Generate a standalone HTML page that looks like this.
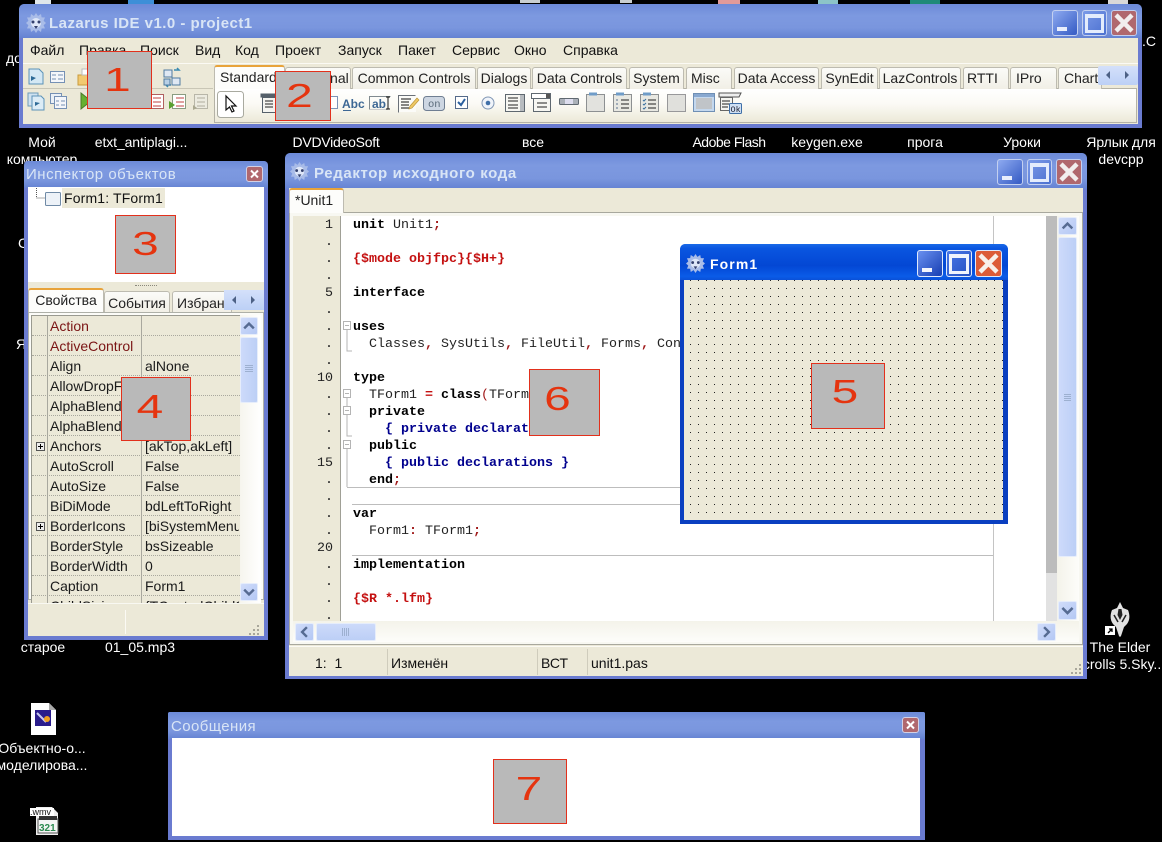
<!DOCTYPE html>
<html><head><meta charset="utf-8"><title>Lazarus IDE</title>
<style>
html,body{margin:0;padding:0;background:#000;}
#p{position:relative;width:1162px;height:842px;overflow:hidden;background:#000;font-family:"Liberation Sans",sans-serif;font-size:14px;}
.a{position:absolute;}
.t{position:absolute;white-space:nowrap;line-height:16px;color:#111;}
.d{position:absolute;white-space:nowrap;line-height:16px;color:#fff;transform:translateX(-50%);font-size:14px;}
.win{position:absolute;background:#6a7bd0;border-radius:6px 6px 0 0;}
.title{position:absolute;border-radius:5px 5px 0 0;background:linear-gradient(#6c8ad8 0,#7d99e0 35%,#7a96de 70%,#6482d2 100%);}
.tt{position:absolute;white-space:nowrap;color:#d9e5f6;font-weight:bold;line-height:18px;}
.btn{position:absolute;box-sizing:border-box;border:1px solid #c3d0f0;border-radius:3px;}
.tab{position:absolute;box-sizing:border-box;top:67px;height:22px;border:1px solid #bdbbb0;border-bottom:0;border-radius:3px 3px 0 0;background:linear-gradient(#fbfbf8,#f1efe6);text-align:center;line-height:21px;color:#222;white-space:nowrap;overflow:hidden;}
.sb{position:absolute;box-sizing:border-box;border:1px solid #e6edfb;border-radius:2px;background:linear-gradient(135deg,#d0dcfa,#b4c8f4);}
.box{position:absolute;box-sizing:border-box;background:#b9b9b9;border:1px solid #e2301c;overflow:hidden;}
.box span{position:absolute;left:0;right:0;text-align:center;color:#e5340f;font-size:33px;line-height:40px;transform:scaleX(1.45);}
.c{position:absolute;left:0;white-space:pre;font:13.33px/17px "Liberation Mono",monospace;color:#222;height:17px;}
.k{font-weight:bold;color:#000;}
.s{color:#a01818;font-weight:bold;}
.r{font-weight:bold;color:#c41010;}
.b{font-weight:bold;color:#00008e;}
.n{position:absolute;right:0;font:13.33px/17px "Liberation Mono",monospace;color:#222;}
.row{position:absolute;left:0;width:208px;height:20px;border-bottom:1px dotted #a9a89e;box-sizing:border-box;}
.gn{position:absolute;left:18px;top:2px;line-height:16px;white-space:nowrap;color:#1a1a1a;}
.gv{position:absolute;left:113px;top:2px;line-height:16px;white-space:nowrap;color:#1a1a1a;width:94px;overflow:hidden;}
</style></head><body><div id="p">

<svg width="0" height="0" style="position:absolute"><defs>
<symbol id="gear" viewBox="0 0 20 20">
<path d="M10 0l2 3 3-2 .6 3.4 3.4.1-1.4 3.2L20 10l-2.4 2.2 1.4 3.2-3.4.1L15 19l-3-2-2 3-2-3-3 2-.6-3.5-3.4-.1 1.4-3.2L0 10l2.4-2.3L1 4.500l3.400-.1L5 1l3 2z" fill="#a9bce8"/>
<circle cx="10" cy="10" r="5" fill="#dfe7f8"/><circle cx="7" cy="9" r="1.500" fill="#33406e"/><circle cx="13" cy="9" r="1.500" fill="#33406e"/><path d="M8 13l2 3 2-3z" fill="#33406e"/>
</symbol>
<symbol id="dn" viewBox="0 0 10 10"><path d="M2 3.500l3 3 3-3" fill="none" stroke="#566b92" stroke-width="1.500"/></symbol>
<symbol id="up" viewBox="0 0 10 10"><path d="M2 6.500l3-3 3 3" fill="none" stroke="#566b92" stroke-width="1.500"/></symbol>
<symbol id="lf" viewBox="0 0 10 10"><path d="M6.500 2L3.500 5l3 3" fill="none" stroke="#566b92" stroke-width="1.500"/></symbol>
<symbol id="rt" viewBox="0 0 10 10"><path d="M3.500 2l3 3-3 3" fill="none" stroke="#566b92" stroke-width="1.500"/></symbol>
</defs></svg>

<!-- desktop -->
<div class="a" style="left:35px;top:0;width:16px;height:4px;background:#dfe6ea"></div>
<div class="a" style="left:128px;top:0;width:26px;height:4px;background:#3d8fd8"></div>
<div class="a" style="left:520px;top:0;width:20px;height:3px;background:#c8ced0"></div>
<div class="a" style="left:620px;top:0;width:12px;height:3px;background:#c8ced0"></div>
<div class="a" style="left:718px;top:0;width:22px;height:4px;background:#e09a9a"></div>
<div class="a" style="left:818px;top:0;width:20px;height:4px;background:#8cc4c8"></div>
<div class="a" style="left:910px;top:0;width:30px;height:4px;background:#1f8a78"></div>
<div class="a" style="left:1108px;top:0;width:20px;height:4px;background:#d8d8d8"></div>
<div class="d" style="left:14px;top:50px;">до</div>
<div class="d" style="left:1149px;top:33px;">.С</div>
<div class="d" style="left:42px;top:134px;">Мой</div>
<div class="d" style="left:42px;top:151px;">компьютер</div>
<div class="d" style="left:141px;top:134px;letter-spacing:-.1px">etxt_antiplagi...</div>
<div class="d" style="left:336px;top:134px;letter-spacing:-.25px">DVDVideoSoft</div>
<div class="d" style="left:533px;top:134px;">все</div>
<div class="d" style="left:729px;top:134px;letter-spacing:-.5px">Adobe Flash</div>
<div class="d" style="left:827px;top:134px;">keygen.exe</div>
<div class="d" style="left:925px;top:134px;">прога</div>
<div class="d" style="left:1022px;top:134px;">Уроки</div>
<div class="d" style="left:1121px;top:134px;">Ярлык для</div>
<div class="d" style="left:1121px;top:151px;">devcpp</div>
<div class="d" style="left:23px;top:235px;">С</div>
<div class="d" style="left:21px;top:336px;">Я</div>
<div class="d" style="left:43px;top:639px;">старое</div>
<div class="d" style="left:140px;top:639px;">01_05.mp3</div>
<div class="d" style="left:1120px;top:639px;">The Elder</div>
<div class="d" style="left:1124px;top:656px;">crolls 5.Sky...</div>
<div class="d" style="left:42px;top:740px;">Объектно-о...</div>
<div class="d" style="left:42px;top:757px;">моделирова...</div>
<svg class="a" style="left:28px;top:700px" width="32" height="140" viewBox="0 0 32 140">
<path d="M3 3h18l7 7v25H3z" fill="#fff"/><path d="M21 3v7h7z" fill="#aaa"/>
<rect x="7" y="10" width="16" height="16" fill="#2a1c8c"/><path d="M9 13l9 9" stroke="#c8c8f0" stroke-width="2"/><circle cx="19" cy="19" r="3" fill="#f0a020"/>
<path d="M8 107h16l6 6v22H8z" fill="#eee"/>
<rect x="2" y="108" width="24" height="8" fill="#fff"/>
<text x="2" y="115" font-size="9" fill="#111" font-family="Liberation Sans">.wmv</text>
<rect x="10" y="119" width="20" height="14" fill="#f4f4f4" stroke="#555"/><rect x="11" y="116" width="18" height="4" fill="#333"/>
<text x="11" y="131" font-size="10" font-weight="bold" fill="#2c8a50" font-family="Liberation Sans">321</text>
</svg>
<svg class="a" style="left:1104px;top:602px" width="30" height="36" viewBox="0 0 30 36">
<path d="M16 0l3 6 5 2c2 5 2 10-1 14l-3 3-3 9-1 1-1-1-3-9-3-3C6 18 6 13 8 8l5-2z" fill="#e2e2e2"/>
<path d="M14.500 7h3l1 6-2.500 5-2.500-5z" fill="#222"/><path d="M10 13l4 7M22 13l-4 7" stroke="#222" stroke-width="1.500"/>
<rect x="1" y="24" width="10" height="9" fill="#fff"/><path d="M4 31l4-4M5 27h3v3" stroke="#000" stroke-width="1.300" fill="none"/>
</svg>

<!-- main window -->
<div class="win" style="left:19px;top:4px;width:1123px;height:124px;"></div>
<div class="title" style="left:19px;top:4px;width:1123px;height:34px;"></div>
<svg class="a" style="left:26px;top:13px" width="20" height="20"><use href="#gear"/></svg>
<div class="tt" style="left:49px;top:15px;font-size:15px;letter-spacing:.47px;">Lazarus IDE v1.0 - project1</div>
<div class="btn" style="left:1052px;top:10px;width:26px;height:26px;background:linear-gradient(135deg,#8eaaf0,#3d62c8 90%);"><div class="a" style="left:4px;bottom:4px;width:10px;height:4px;background:#e8eefc"></div></div>
<div class="btn" style="left:1082px;top:10px;width:25px;height:26px;background:linear-gradient(135deg,#7b9ae8,#4b70d0);"><div class="a" style="left:2px;top:3px;right:2px;bottom:2px;border:3px solid #e4ecfc;border-top-width:4px;box-sizing:border-box;"></div></div>
<div class="btn" style="left:1111px;top:10px;width:26px;height:26px;background:#b0686e;"><svg width="24" height="24" style="display:block"><path d="M4 4l16 16M20 4L4 20" stroke="#f2eeee" stroke-width="4.500"/></svg></div>

<div class="a" style="left:23px;top:38px;width:1115px;height:86px;background:#ece9d8;"></div>
<div class="t" style="left:30px;top:42px;">Файл</div>
<div class="t" style="left:79px;top:42px;">Правка</div>
<div class="t" style="left:140px;top:42px;">Поиск</div>
<div class="t" style="left:195px;top:42px;">Вид</div>
<div class="t" style="left:235px;top:42px;">Код</div>
<div class="t" style="left:275px;top:42px;">Проект</div>
<div class="t" style="left:338px;top:42px;">Запуск</div>
<div class="t" style="left:398px;top:42px;">Пакет</div>
<div class="t" style="left:452px;top:42px;">Сервис</div>
<div class="t" style="left:514px;top:42px;">Окно</div>
<div class="t" style="left:563px;top:42px;">Справка</div>
<div class="a" style="left:23px;top:63px;width:1115px;height:1px;background:#fbfaf4"></div>
<div class="a" style="left:23px;top:88px;width:190px;height:1px;background:#c9c6b6"></div>

<!-- palette -->
<div class="a" style="left:214px;top:88px;width:923px;height:35px;box-sizing:border-box;border:1px solid #b4b2a6;background:linear-gradient(#fff 0,#fbfaf5 45%,#ece9d8 100%);"></div>
<div class="tab" style="left:214px;top:65px;height:24px;width:71px;background:#fdfdfb;border-top:2px solid #e8a33a;border-bottom:0;line-height:20px;text-align:left;padding-left:5px;">Standard</div>
<div class="tab" style="left:285px;width:66px;">Additional</div>
<div class="tab" style="left:352px;width:124px;">Common Controls</div>
<div class="tab" style="left:477px;width:54px;">Dialogs</div>
<div class="tab" style="left:532px;width:95px;">Data Controls</div>
<div class="tab" style="left:629px;width:55px;">System</div>
<div class="tab" style="left:686px;width:46px;text-align:left;padding-left:4px;">Misc</div>
<div class="tab" style="left:734px;width:85px;">Data Access</div>
<div class="tab" style="left:821px;width:57px;">SynEdit</div>
<div class="tab" style="left:879px;width:82px;">LazControls</div>
<div class="tab" style="left:963px;width:46px;text-align:left;padding-left:3px;">RTTI</div>
<div class="tab" style="left:1010px;width:47px;text-align:left;padding-left:5px;">IPro</div>
<div class="tab" style="left:1058px;width:44px;text-align:left;padding-left:5px;">Chart</div>
<div class="a" style="left:1098px;top:66px;width:40px;height:19px;background:linear-gradient(#d4e0fa,#bcd0f6);border-radius:2px;"></div>
<svg class="a" style="left:1103px;top:70px" width="10" height="10"><path d="M7 1L3 5l4 4z" fill="#4d6185"/></svg>
<svg class="a" style="left:1122px;top:70px" width="10" height="10"><path d="M3 1l4 4-4 4z" fill="#4d6185"/></svg>

<svg class="a" style="left:0;top:60px" width="1162" height="70" viewBox="0 60 1162 70" font-family="Liberation Sans">
<path d="M29 69h10l4 4v11H29z" fill="#d4e8f4" stroke="#5b92b8"/><path d="M31 76l5 2-5 3z" fill="#2d6a96"/>
<rect x="50.500" y="71.500" width="14" height="11" fill="#f4f6fa" stroke="#7590b4"/><path d="M52 75h4M58 75h5M52 79h4M58 79h5" stroke="#7590b4"/>
<path d="M78 75h12v10H78z" fill="#f2c970" stroke="#c99a3c"/><path d="M82 69h8v6h-8z" fill="#fff" stroke="#bbb"/>
<rect x="164" y="70" width="8" height="7" fill="#dfe8f3" stroke="#4f7aa0"/><rect x="172" y="78" width="8" height="7" fill="#dfe8f3" stroke="#4f7aa0"/><path d="M174 70h5l-2-2M171 85h-5l2 2" stroke="#3a8ab0" fill="none" stroke-width="1.500"/><path d="M164 79h6v6h-6z" fill="#b8d0e6" stroke="#4f7aa0"/>
<rect x="28" y="93" width="10" height="13" fill="#cfe2f0" stroke="#6c9ab8"/><path d="M32 96h9l3 3v11H32z" fill="#dcecf6" stroke="#5b92b8"/><path d="M35 102l5 1-5 3z" fill="#2d6a96"/>
<rect x="50.500" y="93.500" width="11" height="10" fill="#eaf0f6" stroke="#7590b4"/><rect x="54.500" y="96.500" width="12" height="12" fill="#f4f6fa" stroke="#7590b4"/><path d="M56 101h3M61 101h4M56 105h3M61 105h4" stroke="#7590b4"/>
<path d="M81 93l10 8-10 8z" fill="#66b030" stroke="#4a7a28"/>
<rect x="150.500" y="94.500" width="13" height="14" fill="#fff" stroke="#b06060"/><path d="M153 98h8M153 102h8M153 106h8" stroke="#c04040"/>
<rect x="172.500" y="94.500" width="13" height="14" fill="#fff" stroke="#8a9c80"/><path d="M176 98h8M176 102h8M176 106h8" stroke="#c04040"/><path d="M169 101l6 4-6 4z" fill="#5aa030"/>
<rect x="194.500" y="94.500" width="13" height="14" fill="#ecebe0" stroke="#b8b6a8"/><path d="M197 98h8M197 102h8M197 106h8" stroke="#b0ae9e"/><path d="M193 105l4 3-4 2z" fill="#aaa890"/>
<rect x="217.500" y="91.500" width="26" height="26" rx="3" fill="#fff" stroke="#a9aaa0"/>
<path d="M226 96v14l3.500-3 2.500 5 2-1-2.500-5h4.500z" fill="#fff" stroke="#111" stroke-width="1.200"/>
<rect x="260.500" y="93.500" width="15" height="4" fill="#55606a"/><rect x="262.500" y="97.500" width="13" height="15" fill="#f4f4f0" stroke="#55606a"/><path d="M265 101h8M265 104h8M265 107h8" stroke="#222"/>
<rect x="329.500" y="96.500" width="8" height="12" fill="#fff" stroke="#7d94b8"/>
<text x="342" y="108" font-size="12" font-weight="bold" fill="#3d6794">Abc</text><path d="M343 110.500h8" stroke="#3d6794"/>
<path d="M369.500 109.500v-13h21" fill="none" stroke="#808a90"/><path d="M370 109.500h18" stroke="#ccc"/>
<text x="372" y="108" font-size="12" font-weight="bold" fill="#3d6794">ab</text>
<path d="M386 97h4M388 97v12M386 109h4" stroke="#111" fill="none"/>
<path d="M398.500 112.500v-17h17" fill="none" stroke="#6a7078"/><rect x="399" y="96" width="17" height="16" fill="#fbfbf8"/><path d="M401 99h10M401 102h8M401 105h8M401 108h9" stroke="#111"/><path d="M410 106l7-8 2 2-7 8-3 1z" fill="#eec866" stroke="#b89030" stroke-width=".6"/>
<rect x="423.500" y="96.500" width="21" height="14" rx="3" fill="#cdd6e2" stroke="#6f7e92"/><text x="428" y="107" font-size="10.500" fill="#5a6a7a" font-family="Liberation Mono">on</text>
<rect x="455.500" y="96.500" width="12" height="12" fill="#fff" stroke="#556a8a"/><path d="M458 102l3 3 4-6" stroke="#2a5f9e" stroke-width="2" fill="none"/>
<circle cx="488" cy="103" r="6" fill="#f0f4fa" stroke="#8096b4"/><circle cx="488" cy="103" r="2.300" fill="#3f6fa8"/>
<rect x="505.500" y="94.500" width="19" height="17" fill="#f6f6f2" stroke="#5f6870"/><path d="M508 98h10M508 101h10M508 105h10M508 108h10" stroke="#222"/><rect x="520" y="95" width="4" height="16" fill="#b8bcc0"/>
<rect x="531.500" y="93.500" width="19" height="5" fill="#fff" stroke="#5f6870"/><rect x="546" y="94" width="4" height="4" fill="#555"/><rect x="533.500" y="98.500" width="17" height="13" fill="#f6f6f2" stroke="#5f6870"/><path d="M537 103h10M537 107h10" stroke="#222"/>
<rect x="559.500" y="98.500" width="19" height="6" rx="1" fill="#aab0b8" stroke="#5f6870"/><rect x="565" y="99" width="8" height="5" fill="#dde" />
<rect x="586.500" y="94.500" width="18" height="17" fill="#e2e2de" stroke="#8d9092"/><rect x="589" y="92.500" width="8" height="3" fill="#6f9cc8"/>
<rect x="613.500" y="94.500" width="18" height="17" fill="#e8e8e2" stroke="#8d9092"/><rect x="616" y="92.500" width="8" height="3" fill="#6f9cc8"/><path d="M621 100h8M621 104h8M621 108h8" stroke="#222"/><path d="M616 100h2M616 104h2M616 108h2" stroke="#5a7090"/>
<rect x="640.500" y="94.500" width="18" height="17" fill="#e8e8e2" stroke="#8d9092"/><rect x="643" y="92.500" width="8" height="3" fill="#6f9cc8"/><path d="M648 100h8M648 104h8M648 108h8" stroke="#222"/><path d="M643 100l1 1 2-2M643 104l1 1 2-2M643 108l1 1 2-2" stroke="#3a70a0" fill="none"/>
<rect x="667.500" y="94.500" width="18" height="17" fill="#e0e0dc" stroke="#98989a"/>
<rect x="693.500" y="93.500" width="21" height="18" fill="#c4d8ee" stroke="#6f8fb4"/><rect x="696" y="98" width="16" height="11" fill="#c0c4c8"/><rect x="694" y="94" width="20" height="3" fill="#88a8d0"/>
<path d="M719 93h22l-2 4H719z" fill="#eee" stroke="#555"/><rect x="720.500" y="97.500" width="12" height="13" fill="#f4f4f0" stroke="#666"/><path d="M722 101h8M722 104h8M722 107h6" stroke="#222"/><rect x="729.500" y="103.500" width="12" height="10" rx="1" fill="#cfe0f4" stroke="#3f6fa8"/><text x="730.500" y="112" font-size="8.500" fill="#223" font-family="Liberation Mono">Ok</text>
</svg>

<!-- Inspector -->
<div class="win" style="left:24px;top:161px;width:244px;height:479px;border-radius:4px 4px 0 0;"></div>
<div class="title" style="left:24px;top:161px;width:244px;height:27px;"></div>
<div class="tt" style="left:26px;top:166px;font-size:15px;font-weight:normal;letter-spacing:.5px;">Инспектор объектов</div>
<div class="btn" style="left:246px;top:166px;width:17px;height:16px;background:#b0686e;border-color:#d4d0e4;"><svg width="15" height="14" style="display:block"><path d="M4 3.500l7 7M11 3.500l-7 7" stroke="#fff" stroke-width="2"/></svg></div>
<div class="a" style="left:28px;top:187px;width:236px;height:449px;background:#ece9d8;"></div>
<div class="a" style="left:28px;top:187px;width:236px;height:95px;background:#fff;"></div>
<svg class="a" style="left:34px;top:188px" width="30" height="20"><path d="M2.500 0v10h9" fill="none" stroke="#555" stroke-dasharray="1 1"/><rect x="11.500" y="4.500" width="15" height="13" rx="1" fill="#edf2f8" stroke="#6f8aa6"/></svg>
<div class="a" style="left:62px;top:188px;width:103px;height:20px;background:#ece9d8;"></div>
<div class="t" style="left:64px;top:190px;letter-spacing:.15px;">Form1: TForm1</div>
<div class="a" style="left:135px;top:285px;width:22px;height:1px;border-top:1px dotted #8a887c;"></div>
<div class="tab" style="left:28px;top:288px;height:25px;width:76px;background:#fdfdfb;border-top:2px solid #e8a33a;line-height:21px;">Свойства</div>
<div class="tab" style="left:104px;top:291px;height:22px;width:66px;line-height:23px;">События</div>
<div class="tab" style="left:172px;top:291px;height:22px;width:60px;line-height:23px;text-align:left;padding-left:4px;">Избранное</div>
<div class="a" style="left:224px;top:290px;width:40px;height:20px;background:linear-gradient(#d4e0fa,#bcd0f6);"></div>
<svg class="a" style="left:229px;top:295px" width="10" height="10"><path d="M7 1L3 5l4 4z" fill="#4d6185"/></svg>
<svg class="a" style="left:248px;top:295px" width="10" height="10"><path d="M3 1l4 4-4 4z" fill="#4d6185"/></svg>
<div class="a" style="left:28px;top:312px;width:236px;height:288px;box-sizing:border-box;border:1px solid #aeb0a8;background:#fcfcf8;"></div>
<div class="a" style="left:31px;top:315px;width:209px;height:288px;overflow:hidden;background:#ece9d8;border-left:1px solid #9a9a90;border-top:1px solid #9a9a90;box-sizing:border-box;">
 <div class="a" style="left:15px;top:0;width:1px;height:288px;background:#a9a89e;"></div>
 <div class="a" style="left:109px;top:0;width:1px;height:288px;background:#a9a89e;"></div>
 <div class="row" style="top:0"><div class="gn" style="color:#7a1414">Action</div></div>
 <div class="row" style="top:20px"><div class="gn" style="color:#7a1414">ActiveControl</div></div>
 <div class="row" style="top:40px"><div class="gn">Align</div><div class="gv">alNone</div></div>
 <div class="row" style="top:60px"><div class="gn">AllowDropFiles</div></div>
 <div class="row" style="top:80px"><div class="gn">AlphaBlend</div></div>
 <div class="row" style="top:100px"><div class="gn">AlphaBlendValue</div></div>
 <div class="row" style="top:120px"><div class="gn">Anchors</div><div class="gv">[akTop,akLeft]</div><div class="a" style="left:4px;top:6px;width:7px;height:7px;border:1px solid #555;background:linear-gradient(#000,#000) center/5px 1px no-repeat,linear-gradient(#000,#000) center/1px 5px no-repeat,#eee"></div></div>
 <div class="row" style="top:140px"><div class="gn">AutoScroll</div><div class="gv">False</div></div>
 <div class="row" style="top:160px"><div class="gn">AutoSize</div><div class="gv">False</div></div>
 <div class="row" style="top:180px"><div class="gn">BiDiMode</div><div class="gv">bdLeftToRight</div></div>
 <div class="row" style="top:200px"><div class="gn">BorderIcons</div><div class="gv">[biSystemMenu,</div><div class="a" style="left:4px;top:6px;width:7px;height:7px;border:1px solid #555;background:linear-gradient(#000,#000) center/5px 1px no-repeat,linear-gradient(#000,#000) center/1px 5px no-repeat,#eee"></div></div>
 <div class="row" style="top:220px"><div class="gn">BorderStyle</div><div class="gv">bsSizeable</div></div>
 <div class="row" style="top:240px"><div class="gn">BorderWidth</div><div class="gv">0</div></div>
 <div class="row" style="top:260px"><div class="gn">Caption</div><div class="gv">Form1</div></div>
 <div class="row" style="top:280px"><div class="gn">ChildSizing</div><div class="gv">{TControlChildS</div></div>
</div>
<div class="a" style="left:240px;top:315px;width:21px;height:288px;background:linear-gradient(90deg,#f6f5ee,#fff);"></div>
<div class="sb" style="left:240px;top:317px;width:18px;height:18px;"><svg width="16" height="16" style="display:block"><use href="#up"/></svg></div>
<div class="sb" style="left:240px;top:337px;width:18px;height:66px;background:linear-gradient(90deg,#cddafa,#bccff6);"><div class="a" style="left:4px;top:27px;width:8px;height:7px;background:repeating-linear-gradient(#9db0d0 0 1px,transparent 1px 2px)"></div></div>
<div class="sb" style="left:240px;top:583px;width:18px;height:18px;"><svg width="16" height="16" style="display:block"><use href="#dn"/></svg></div>
<div class="a" style="left:28px;top:603px;width:236px;height:1px;background:#f8f8f2"></div>
<div class="a" style="left:125px;top:610px;width:1px;height:24px;background:#fbfaf4"></div>
<svg class="a" style="left:248px;top:624px" width="14" height="12"><path d="M9 1h2v2H9zM5 5h2v2H5zM9 5h2v2H9zM1 9h2v2H1zM5 9h2v2H5zM9 9h2v2H9z" fill="#a8a69a"/></svg>

<!-- Editor -->
<div class="win" style="left:285px;top:153px;width:802px;height:526px;"></div>
<div class="title" style="left:285px;top:153px;width:802px;height:36px;"></div>
<svg class="a" style="left:290px;top:162px" width="19" height="19"><use href="#gear"/></svg>
<div class="tt" style="left:314px;top:165px;font-size:15px;letter-spacing:.62px;">Редактор исходного кода</div>
<div class="btn" style="left:997px;top:159px;width:26px;height:26px;background:linear-gradient(135deg,#8eaaf0,#3d62c8 90%);"><div class="a" style="left:4px;bottom:4px;width:10px;height:4px;background:#e8eefc"></div></div>
<div class="btn" style="left:1027px;top:159px;width:25px;height:26px;background:linear-gradient(135deg,#7b9ae8,#4b70d0);"><div class="a" style="left:2px;top:3px;right:2px;bottom:2px;border:3px solid #e4ecfc;border-top-width:4px;box-sizing:border-box;"></div></div>
<div class="btn" style="left:1056px;top:159px;width:26px;height:26px;background:#b0686e;"><svg width="24" height="24" style="display:block"><path d="M4 4l16 16M20 4L4 20" stroke="#f2eeee" stroke-width="4.500"/></svg></div>
<div class="a" style="left:289px;top:188px;width:794px;height:488px;background:#ece9d8;"></div>
<div class="a" style="left:289px;top:212px;width:794px;height:433px;box-sizing:border-box;border:1px solid #a8a89e;background:#f8f8f2;"></div>
<div class="tab" style="left:289px;top:188px;height:25px;width:55px;background:#fdfdfb;border-top:2px solid #e8a33a;line-height:21px;text-align:left;padding-left:5px;">*Unit1</div>
<div class="a" style="left:293px;top:216px;width:764px;height:405px;background:#fff;overflow:hidden;"></div>
<div class="a" style="left:293px;top:216px;width:47px;height:405px;background:#ece9d8;"></div>
<div class="a" style="left:293px;top:217px;width:47px;height:404px;overflow:hidden;">
 <div class="n" style="top:0;right:7px">1</div><div class="n" style="top:17px;right:7px">.</div><div class="n" style="top:34px;right:7px">.</div><div class="n" style="top:51px;right:7px">.</div><div class="n" style="top:68px;right:7px">5</div><div class="n" style="top:85px;right:7px">.</div><div class="n" style="top:102px;right:7px">.</div><div class="n" style="top:119px;right:7px">.</div><div class="n" style="top:136px;right:7px">.</div><div class="n" style="top:153px;right:7px">10</div><div class="n" style="top:170px;right:7px">.</div><div class="n" style="top:187px;right:7px">.</div><div class="n" style="top:204px;right:7px">.</div><div class="n" style="top:221px;right:7px">.</div><div class="n" style="top:238px;right:7px">15</div><div class="n" style="top:255px;right:7px">.</div><div class="n" style="top:272px;right:7px">.</div><div class="n" style="top:289px;right:7px">.</div><div class="n" style="top:306px;right:7px">.</div><div class="n" style="top:323px;right:7px">20</div><div class="n" style="top:340px;right:7px">.</div><div class="n" style="top:357px;right:7px">.</div><div class="n" style="top:374px;right:7px">.</div><div class="n" style="top:391px;right:7px">.</div>
</div>
<div class="a" style="left:340px;top:216px;width:1px;height:405px;background:#a0a096;"></div>
<div class="a" style="left:993px;top:216px;width:1px;height:405px;background:#c4c4c4;"></div>
<div class="a" style="left:1046px;top:216px;width:11px;height:357px;background:#bcbcbc;"></div>
<div class="a" style="left:1046px;top:573px;width:11px;height:48px;background:#e2e2e2;"></div>
<svg class="a" style="left:341px;top:316px" width="660" height="245" viewBox="341 316 660 245">
<g fill="#fff" stroke="#b4b4b4">
<rect x="343.500" y="321.500" width="7" height="8"/><rect x="343.500" y="389.500" width="7" height="8"/><rect x="343.500" y="406.500" width="7" height="8"/><rect x="343.500" y="440.500" width="7" height="8"/>
<path d="M347 330v21h5M347 398v8M347 415v21h5M347 449v38" fill="none"/>
</g>
<path d="M345 325.500h4M345 393.500h4M345 410.500h4M345 444.500h4" stroke="#b4b4b4"/>
<path d="M347 487.500h646M352 504.500h641M352 555.500h641" stroke="#bdbdbd"/>
</svg>
<div class="a" style="left:353px;top:217px;width:330px;height:404px;overflow:hidden;">
 <div class="c" style="top:0"><span class="k">unit</span> Unit1<span class="s">;</span></div>
 <div class="c" style="top:34px"><span class="r">{$mode objfpc}{$H+}</span></div>
 <div class="c" style="top:68px"><span class="k">interface</span></div>
 <div class="c" style="top:102px"><span class="k">uses</span></div>
 <div class="c" style="top:119px">  Classes<span class="s">,</span> SysUtils<span class="s">,</span> FileUtil<span class="s">,</span> Forms<span class="s">,</span> Controls</div>
 <div class="c" style="top:153px"><span class="k">type</span></div>
 <div class="c" style="top:170px">  TForm1 <span class="s" style="color:#c41010">=</span> <span class="k">class</span><span class="s" style="font-weight:normal">(</span>TForm<span class="s" style="font-weight:normal">)</span></div>
 <div class="c" style="top:187px">  <span class="k">private</span></div>
 <div class="c" style="top:204px">    <span class="b">{ private declarations }</span></div>
 <div class="c" style="top:221px">  <span class="k">public</span></div>
 <div class="c" style="top:238px">    <span class="b">{ public declarations }</span></div>
 <div class="c" style="top:255px">  <span class="k">end</span><span class="s">;</span></div>
 <div class="c" style="top:289px"><span class="k">var</span></div>
 <div class="c" style="top:306px">  Form1<span class="s">:</span> TForm1<span class="s">;</span></div>
 <div class="c" style="top:340px"><span class="k">implementation</span></div>
 <div class="c" style="top:374px"><span class="r">{$R *.lfm}</span></div>
</div>
<div class="a" style="left:1057px;top:216px;width:22px;height:405px;background:linear-gradient(90deg,#f4f3ea,#fdfdfa);"></div>
<div class="sb" style="left:1058px;top:217px;width:19px;height:18px;"><svg width="17" height="16" style="display:block"><use href="#up"/></svg></div>
<div class="sb" style="left:1058px;top:237px;width:19px;height:320px;background:linear-gradient(90deg,#cddafa,#bccff6);"><div class="a" style="left:5px;top:156px;width:7px;height:7px;background:repeating-linear-gradient(#9db0d0 0 1px,transparent 1px 2px)"></div></div>
<div class="sb" style="left:1058px;top:601px;width:19px;height:19px;"><svg width="17" height="17" style="display:block"><use href="#dn"/></svg></div>
<div class="a" style="left:293px;top:621px;width:786px;height:21px;background:linear-gradient(#f4f3ea,#fdfdfa);"></div>
<div class="sb" style="left:295px;top:623px;width:19px;height:18px;"><svg width="17" height="16" style="display:block"><use href="#lf"/></svg></div>
<div class="sb" style="left:316px;top:623px;width:60px;height:18px;background:linear-gradient(#cddafa,#bccff6);"><div class="a" style="left:25px;top:4px;width:8px;height:8px;background:repeating-linear-gradient(90deg,#9db0d0 0 1px,transparent 1px 2px)"></div></div>
<div class="sb" style="left:1037px;top:623px;width:19px;height:18px;"><svg width="17" height="16" style="display:block"><use href="#rt"/></svg></div>
<div class="a" style="left:289px;top:646px;width:794px;height:1px;background:#fbfaf4"></div>
<div class="a" style="left:387px;top:649px;width:1px;height:26px;background:#cfccbc"></div>
<div class="a" style="left:537px;top:649px;width:1px;height:26px;background:#cfccbc"></div>
<div class="a" style="left:587px;top:649px;width:1px;height:26px;background:#cfccbc"></div>
<div class="t" style="left:315px;top:655px;white-space:pre;">1:  1</div>
<div class="t" style="left:391px;top:655px;">Изменён</div>
<div class="t" style="left:541px;top:655px;">ВСТ</div>
<div class="t" style="left:591px;top:655px;">unit1.pas</div>
<svg class="a" style="left:1070px;top:663px" width="13" height="12"><path d="M9 1h2v2H9zM5 5h2v2H5zM9 5h2v2H9zM1 9h2v2H1zM5 9h2v2H5zM9 9h2v2H9z" fill="#a8a69a"/></svg>

<!-- Form1 -->
<div class="win" style="left:680px;top:244px;width:328px;height:280px;background:#0a3fc0;border-radius:6px 6px 0 0;"></div>
<div class="title" style="left:680px;top:244px;width:328px;height:36px;background:linear-gradient(#1a6ae8 0,#0a56e0 12%,#0347d4 60%,#0a5ce8 90%,#0a50d8 100%);"></div>
<svg class="a" style="left:686px;top:254px" width="19" height="19"><use href="#gear"/></svg>
<div class="tt" style="left:710px;top:255px;font-size:14px;letter-spacing:1.1px;color:#fff;">Form1</div>
<div class="btn" style="left:917px;top:250px;width:26px;height:27px;border-color:#e0eafc;background:linear-gradient(135deg,#6a90f0,#1e46b8 90%);"><div class="a" style="left:4px;bottom:4px;width:10px;height:4px;background:#f4f6fc"></div></div>
<div class="btn" style="left:946px;top:250px;width:26px;height:27px;border-color:#e0eafc;background:linear-gradient(135deg,#4a78e8,#2450c0);"><div class="a" style="left:2px;top:3px;right:2px;bottom:2px;border:3px solid #f0f4fc;border-top-width:4px;box-sizing:border-box;"></div></div>
<div class="btn" style="left:975px;top:250px;width:27px;height:27px;border-color:#e0eafc;background:#dc5c38;"><svg width="25" height="25" style="display:block"><path d="M4 4l17 17M21 4L4 21" stroke="#f8f0ea" stroke-width="4.500"/></svg></div>
<svg class="a" style="left:684px;top:280px" width="319" height="240">
<defs><pattern id="g" x="0" y="0" width="8" height="8" patternUnits="userSpaceOnUse"><rect x="6" y="0" width="1" height="1" fill="#222"/></pattern></defs>
<rect width="319" height="240" fill="#ece9d8"/><rect width="319" height="240" fill="url(#g)"/>
</svg>

<!-- Messages -->
<div class="win" style="left:168px;top:712px;width:757px;height:128px;border-radius:2px 2px 0 0;"></div>
<div class="title" style="left:168px;top:712px;width:757px;height:27px;border-radius:2px 2px 0 0;"></div>
<div class="tt" style="left:171px;top:718px;font-size:15px;font-weight:normal;letter-spacing:.4px;">Сообщения</div>
<div class="btn" style="left:902px;top:717px;width:17px;height:16px;background:#b0686e;border-color:#d4d0e4;"><svg width="15" height="14" style="display:block"><path d="M4 3.500l7 7M11 3.500l-7 7" stroke="#fff" stroke-width="2"/></svg></div>
<div class="a" style="left:172px;top:738px;width:748px;height:98px;background:#fff;"></div>

<!-- grey boxes -->
<div class="box" style="left:87px;top:51px;width:65px;height:58px;"><span style="top:8px;left:-4px;">1</span></div>
<div class="box" style="left:275px;top:71px;width:56px;height:50px;"><span style="top:4px;left:-7px;">2</span></div>
<div class="box" style="left:115px;top:215px;width:61px;height:59px;"><span style="top:8px;">3</span></div>
<div class="box" style="left:121px;top:377px;width:70px;height:64px;"><span style="top:9px;left:-12px;">4</span></div>
<div class="box" style="left:811px;top:363px;width:74px;height:66px;"><span style="top:8px;left:-6px;">5</span></div>
<div class="box" style="left:529px;top:369px;width:71px;height:67px;"><span style="top:9px;left:-14px;">6</span></div>
<div class="box" style="left:493px;top:759px;width:74px;height:65px;"><span style="top:9px;left:-2px;">7</span></div>

</div></body></html>
